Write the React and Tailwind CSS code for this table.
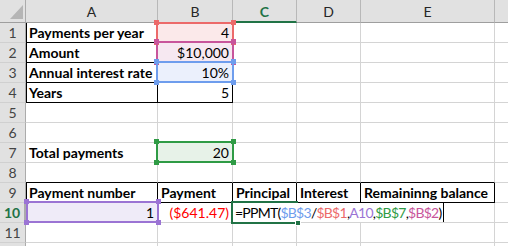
import clsx from 'clsx';

const FONT = "font-['Lato','Liberation_Sans',sans-serif]";

function Cell({ children, className, right }) {
  return (
    <div
      className={clsx(
        'border-r border-b border-[#d4d4d4] whitespace-nowrap px-[3px] text-[14px] leading-[20px] overflow-visible',
        right && 'text-right',
        className
      )}
    >
      {children}
    </div>
  );
}

function ColHead({ children, className }) {
  return (
    <div
      className={clsx(
        'bg-[#e1e1e1] border-r border-r-[#b8b8b8] border-b border-b-[#9e9e9e] text-center text-[14px] leading-[23px]',
        className
      )}
    >
      {children}
    </div>
  );
}

function RowHead({ children, className }) {
  return (
    <div
      className={clsx(
        'bg-[#e1e1e1] border-r border-r-[#ababab] border-b border-b-[#d0d0d0] text-center text-[14px] leading-[20px]',
        className
      )}
    >
      {children}
    </div>
  );
}

function Handles({ color }) {
  return (
    <>
      <span className={clsx('absolute -left-[4px] -top-[4px] w-[5px] h-[5px]', color)} />
      <span className={clsx('absolute -right-[4px] -top-[4px] w-[5px] h-[5px]', color)} />
      <span className={clsx('absolute -left-[4px] -bottom-[4px] w-[5px] h-[5px]', color)} />
      <span className={clsx('absolute -right-[4px] -bottom-[4px] w-[5px] h-[5px]', color)} />
    </>
  );
}

export default function App() {
  const box = 'border-r border-b border-[#d4d4d4]';
  return (
    <div className={clsx('relative w-[508px] h-[246px] overflow-hidden bg-white text-black', FONT)}>
      <div className="grid grid-cols-[26px_132px_75px_64px_64px_134px_1fr] grid-rows-[23px_repeat(11,20px)_1fr] h-full">
        {/* header row */}
        <div className="bg-[#e1e1e1] border-r border-r-[#ababab] border-b border-b-[#9e9e9e] relative">
          <svg className="absolute left-[10px] top-[5px]" width="13" height="15" viewBox="0 0 13 15">
            <polygon points="13,0 13,14 0,14" fill="#b5b5b5" />
          </svg>
        </div>
        <ColHead className="text-[#262626]">A</ColHead>
        <ColHead className="text-[#262626]">B</ColHead>
        <ColHead className="bg-[#cacaca] text-[#217346] font-bold border-b-2 border-b-[#217346]">C</ColHead>
        <ColHead className="text-[#262626]">D</ColHead>
        <ColHead className="text-[#262626]">E</ColHead>
        <ColHead className="border-r-0" />

        {/* row 1 */}
        <RowHead className="text-[#444]">1</RowHead>
        <Cell className="font-bold border-r-black border-b-black shadow-[inset_1px_0_0_#000]">Payments per year</Cell>
        <Cell right className="bg-[#fbe9ea] border-r-black border-b-black">4</Cell>
        <div className={box} /><div className={box} /><div className={box} /><div className="border-b border-[#d4d4d4]" />

        {/* row 2 */}
        <RowHead className="text-[#444]">2</RowHead>
        <Cell className="font-bold border-r-black border-b-black shadow-[inset_1px_0_0_#000]">Amount</Cell>
        <Cell right className="bg-[#f6e8f1] border-r-black border-b-black">$10,000</Cell>
        <div className={box} /><div className={box} /><div className={box} /><div className="border-b border-[#d4d4d4]" />

        {/* row 3 */}
        <RowHead className="text-[#444]">3</RowHead>
        <Cell className="font-bold border-r-black border-b-black shadow-[inset_1px_0_0_#000]">Annual interest rate</Cell>
        <Cell right className="bg-[#ebf0fc] border-r-black border-b-black">10%</Cell>
        <div className={box} /><div className={box} /><div className={box} /><div className="border-b border-[#d4d4d4]" />

        {/* row 4 */}
        <RowHead className="text-[#444]">4</RowHead>
        <Cell className="font-bold border-r-black border-b-black shadow-[inset_1px_0_0_#000]">Years</Cell>
        <Cell right className="border-r-black border-b-black">5</Cell>
        <div className={box} /><div className={box} /><div className={box} /><div className="border-b border-[#d4d4d4]" />

        {/* row 5 */}
        <RowHead className="text-[#444]">5</RowHead>
        <div className={box} /><div className={box} /><div className={box} /><div className={box} /><div className={box} /><div className="border-b border-[#d4d4d4]" />

        {/* row 6 */}
        <RowHead className="text-[#444]">6</RowHead>
        <div className={box} /><div className={box} /><div className={box} /><div className={box} /><div className={box} /><div className="border-b border-[#d4d4d4]" />

        {/* row 7 */}
        <RowHead className="text-[#444]">7</RowHead>
        <Cell className="font-bold">Total payments</Cell>
        <Cell right className="bg-[#e7f2e8]">20</Cell>
        <div className={box} /><div className={box} /><div className={box} /><div className="border-b border-[#d4d4d4]" />

        {/* row 8 */}
        <RowHead className="text-[#444]">8</RowHead>
        <div className={clsx(box, 'border-b-black')} />
        <div className={clsx(box, 'border-b-black')} />
        <div className={clsx(box, 'border-b-black')} />
        <div className={clsx(box, 'border-b-black')} />
        <div className={clsx(box, 'border-b-black')} />
        <div className="border-b border-[#d4d4d4]" />

        {/* row 9 */}
        <RowHead className="text-[#444]">9</RowHead>
        <Cell className="font-bold border-r-black border-b-black shadow-[inset_1px_0_0_#000]">Payment number</Cell>
        <Cell className="font-bold border-r-black border-b-black">Payment</Cell>
        <Cell className="font-bold border-r-black border-b-black">Principal</Cell>
        <Cell className="font-bold border-r-black border-b-black">Interest</Cell>
        <Cell className="font-bold border-r-black border-b-black">Remaininng balance</Cell>
        <div className="border-b border-[#d4d4d4]" />

        {/* row 10 */}
        <RowHead className="bg-[#cacaca] text-[#217346] font-bold border-r-2 border-r-[#217346]">10</RowHead>
        <Cell right className="bg-[#efebf8]">1</Cell>
        <Cell right className="text-[#ff0000]">($641.47)</Cell>
        <div className={box} /><div className={box} /><div className={box} /><div className="border-b border-[#d4d4d4]" />

        {/* row 11 */}
        <RowHead className="text-[#444]">11</RowHead>
        <div className={box} /><div className={box} /><div className={box} /><div className={box} /><div className={box} /><div className="border-b border-[#d4d4d4]" />

        {/* row 12, cut off by the window */}
        <div className="bg-[#e1e1e1] border-r border-r-[#ababab]" />
        <div className="border-r border-[#d4d4d4]" />
        <div className="border-r border-[#d4d4d4]" />
        <div className="border-r border-[#d4d4d4]" />
        <div className="border-r border-[#d4d4d4]" />
        <div className="border-r border-[#d4d4d4]" />
        <div />
      </div>

      {/* formula being edited in C10 */}
      <div className="absolute left-[233px] top-[203px] w-[211px] h-[19px] bg-white border-r border-r-black pl-[2px] text-[14px] tracking-[-0.75px] leading-[19px] whitespace-nowrap overflow-hidden">
        =PPMT(<span className="text-[#6e9ded]">$B$3</span>/<span className="text-[#ec6a6a]">$B$1</span>,<span className="text-[#9b74d4]">A10</span>,<span className="text-[#2f9b45]">$B$7</span>,<span className="text-[#c8559b]">$B$2</span>)
      </div>

      {/* reference range outlines */}
      <div className="absolute left-[156px] top-[22px] w-[78px] h-[21px] border-2 border-[#ec6a6a]">
        <Handles color="bg-[#ec6a6a]" />
      </div>
      <div className="absolute left-[156px] top-[41px] w-[78px] h-[22px] border-2 border-[#c8559b]">
        <Handles color="bg-[#c8559b]" />
      </div>
      <div className="absolute left-[156px] top-[61px] w-[78px] h-[22px] border-2 border-[#6e9ded]">
        <Handles color="bg-[#6e9ded]" />
      </div>
      <div className="absolute left-[156px] top-[141px] w-[78px] h-[22px] border-2 border-[#2f9b45]">
        <Handles color="bg-[#2f9b45]" />
      </div>
      <div className="absolute left-[26px] top-[201px] w-[133px] h-[22px] border-2 border-[#9b74d4]">
        <Handles color="bg-[#9b74d4]" />
      </div>

      {/* active cell */}
      <div className="absolute left-[231px] top-[201px] w-[67px] h-[23px] border-2 border-r-0 border-[#217346]">
        <span className="absolute -right-[3px] -bottom-[4px] w-[6px] h-[6px] bg-[#217346] border border-white" />
      </div>
    </div>
  );
}
